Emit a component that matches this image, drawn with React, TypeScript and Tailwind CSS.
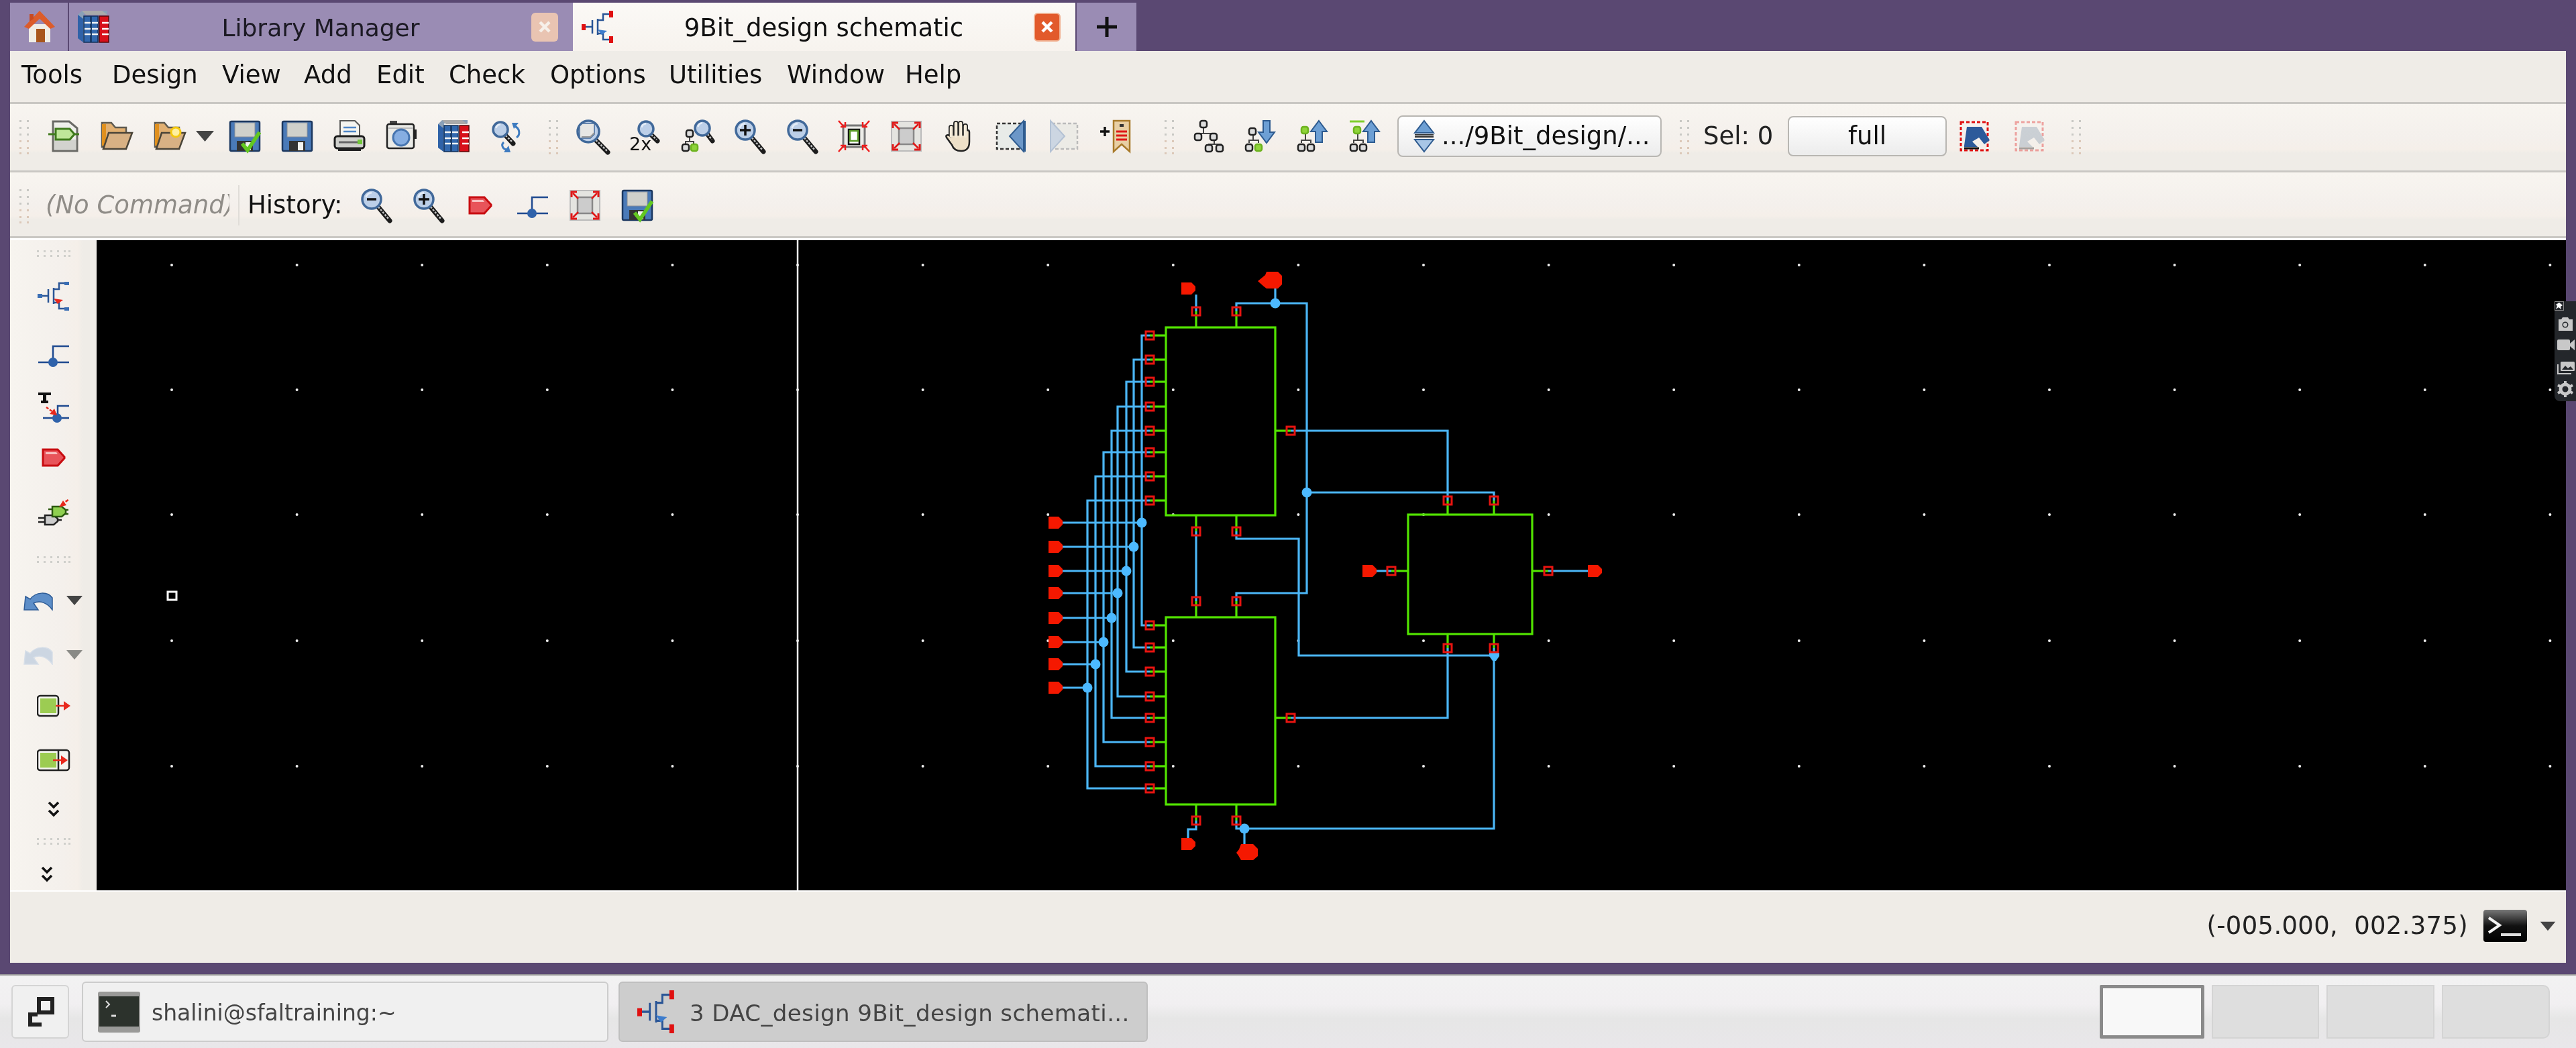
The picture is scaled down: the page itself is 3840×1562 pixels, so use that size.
import React from 'react';

// icon helpers, everything on a 48x48 box unless noted
const Svg = ({ children, w = 48, h = 48 }: { children: React.ReactNode; w?: number; h?: number }) => (
  <svg width={w} height={h} viewBox={`0 0 ${w} ${h}`} className="block shrink-0 overflow-visible">{children}</svg>
);

const Lens = ({ cx = 18, cy = 15, r = 14, hx, hy }: { cx?: number; cy?: number; r?: number; hx?: number; hy?: number }) => {
  const ex = hx ?? cx + r + 13;
  const ey = hy ?? cy + r + 18;
  return (
    <g>
      <line x1={cx + r * 0.6} y1={cy + r * 0.7} x2={ex} y2={ey} stroke="#1c1c1c" strokeWidth="7" strokeLinecap="round" />
      <line x1={cx + r * 0.7} y1={cy + r * 0.8} x2={ex - 1} y2={ey - 2} stroke="#c4c4c4" strokeWidth="2.5" strokeDasharray="3 2" />
      <circle cx={cx} cy={cy} r={r} fill="#bccfe8" stroke="#41699a" strokeWidth="3.5" />
      <path d={`M${cx - r * 0.6} ${cy - r * 0.2}A${r * 0.7} ${r * 0.7} 0 0 1 ${cx} ${cy - r * 0.7}`} stroke="#e6eef8" strokeWidth="2.5" fill="none" />
    </g>
  );
};

const ZoomIn = () => (
  <Svg><Lens /><path d="M10 15H26M18 7V23" stroke="#111" strokeWidth="3.5" /></Svg>
);
const ZoomOut = () => (
  <Svg><Lens /><path d="M11 15H25" stroke="#111" strokeWidth="3.5" /></Svg>
);
const ZoomPlain = () => (
  <Svg>
    <Lens cx={18} cy={17} r={16} hx={47} hy={48} />
    <path d="M5 9L9 5H27V21L21 27H5Z" fill="#e6e6e4" stroke="#41699a" strokeWidth="1.5" />
    <path d="M8 25H21L27 19" stroke="#999" strokeWidth="2" fill="none" />
  </Svg>
);
const Zoom2x = () => (
  <Svg>
    <Lens cx={26} cy={13} r={11} hx={43} hy={31} />
    <text x="1" y="45" fontSize="27" fontFamily="'DejaVu Sans',sans-serif" fill="#111">2x</text>
  </Svg>
);
const SearchRefresh = () => (
  <Svg>
    <Lens cx={15} cy={14} r={11} hx={34} hy={35} />
    <path d="M36 9C44 12 45 22 39 26" stroke="#3f7cc0" strokeWidth="3" fill="none" />
    <path d="M20 33C15 37 19 44 25 44" stroke="#3f7cc0" strokeWidth="3" fill="none" />
    <path d="M32 4H42L35 13ZM30 48H20L27 38Z" fill="#3f7cc0" />
  </Svg>
);

const TreeNode = ({ x, y, c = '#ddd', s = '#222' }: { x: number; y: number; c?: string; s?: string }) => (
  <rect x={x} y={y} width="10" height="10" rx="3" fill={c} stroke={s} strokeWidth="2.5" />
);
const ZoomTree = () => (
  <Svg>
    <Lens cx={32} cy={12} r={11} hx={47} hy={31} />
    <path d="M13 24V32M7 36V32H19V36" stroke="#444" strokeWidth="2" fill="none" />
    <TreeNode x={8} y={15} /><TreeNode x={2} y={36} /><TreeNode x={15} y={36} c="#8fd43a" s="#6db31f" />
  </Svg>
);
const Tree = () => (
  <Svg>
    <path d="M16 10V20M8 22V20H32V22M32 30V36H24V38M32 36H42V38M8 28V30" stroke="#444" strokeWidth="2" fill="none" />
    <TreeNode x={11} y={1} /><TreeNode x={3} y={20} /><TreeNode x={26} y={20} /><TreeNode x={19} y={37} /><TreeNode x={35} y={37} />
  </Svg>
);
const TreeDown = () => (
  <Svg>
    <path d="M12 20V30M6 34V30H20V34" stroke="#444" strokeWidth="2" fill="none" />
    <TreeNode x={6} y={12} /><TreeNode x={1} y={36} /><TreeNode x={15} y={36} c="#8fd43a" s="#6db31f" />
    <path d="M27 1H37V18H44L32 34L20 18H27Z" fill="#6d9fd4" stroke="#2d5a8f" strokeWidth="2" />
  </Svg>
);
const TreeUp = ({ bar = false }: { bar?: boolean }) => (
  <Svg>
    <path d="M12 20V30M6 34V30H20V34" stroke="#444" strokeWidth="2" fill="none" />
    {bar && <path d="M0 2H22" stroke="#7fce2e" strokeWidth="3" />}
    <TreeNode x={6} y={10} c="#8fd43a" s="#6db31f" /><TreeNode x={1} y={36} /><TreeNode x={15} y={36} />
    <path d="M32 1L44 17H37V33H27V17H20Z" fill="#6d9fd4" stroke="#2d5a8f" strokeWidth="2" />
  </Svg>
);

const NewFile = () => (
  <Svg>
    <path d="M8 2H32L44 12V46H8Z" fill="#efefeb" stroke="#6a6a66" strokeWidth="3" />
    <rect x="10" y="29" width="32" height="15" fill="#d2d2ce" />
    <path d="M1 21H13M37 21H47" stroke="#3f7a1c" strokeWidth="3" />
    <path d="M12 13H33L40 21L33 29H12Z" fill="#bfe69a" stroke="#3f7a1c" strokeWidth="3" />
  </Svg>
);
const Folder = ({ star = false }: { star?: boolean }) => (
  <Svg>
    <path d="M2 4H16L22 11H38V40H2Z" fill="#e2b072" stroke="#5e5a50" strokeWidth="2.5" />
    <path d="M2 6H8V38H2Z" fill="#e0901e" />
    <path d="M4 43L12 19H47L38 43Z" fill="#d8b184" stroke="#4a4438" strokeWidth="2.5" />
    {star && <circle cx="33" cy="18" r="7" fill="#fff0a0" stroke="#f5c810" strokeWidth="3" />}
  </Svg>
);
const Floppy = ({ check = false }: { check?: boolean }) => (
  <Svg>
    <rect x="2" y="2" width="44" height="44" rx="2" fill="#4a7ab8" stroke="#1c3860" strokeWidth="2.5" />
    <rect x="9" y="4" width="30" height="21" fill="#cfd0cb" stroke="#8a9098" strokeWidth="1" />
    <rect x="12" y="31" width="24" height="15" fill="#333" />
    <rect x="25" y="33" width="8" height="12" fill="#f4f4f0" />
    {check && <path d="M20 35L28 45L46 18" stroke="#62c820" strokeWidth="5.5" fill="none" />}
  </Svg>
);
const Printer = () => (
  <Svg>
    <path d="M10 1H32L39 8V26H10Z" fill="#f4f4f0" stroke="#555" strokeWidth="2" />
    <path d="M15 11H34M15 17H34" stroke="#4f86c8" strokeWidth="2.5" />
    <rect x="2" y="24" width="44" height="18" rx="4" fill="#d0d0cc" stroke="#1c1c1c" strokeWidth="3" />
    <path d="M8 33H36" stroke="#666" strokeWidth="3" />
    <rect x="36" y="29" width="7" height="7" fill="#72c83a" />
    <rect x="7" y="42" width="34" height="4" fill="#222" />
  </Svg>
);
const CameraIcon = () => (
  <Svg>
    <path d="M6 1H17V7H6Z" fill="#444" />
    <rect x="2" y="6" width="40" height="36" rx="3" fill="#ebebe7" stroke="#222" strokeWidth="2.5" />
    <path d="M3 12H41" stroke="#bbb" strokeWidth="2" />
    <circle cx="23" cy="26" r="12" fill="#86aee2" stroke="#4675b0" strokeWidth="3" />
    <rect x="42" y="14" width="4" height="14" fill="#222" />
  </Svg>
);
const Books = () => (
  <Svg>
    <path d="M0 6L6 0H44V5H9V47L0 41Z" fill="#8aa0b8" />
    <path d="M0 6L8 12V47L0 41Z" fill="#2f62a8" />
    <path d="M6 0H36L44 6H12Z" fill="#aaa" />
    {[9, 20].map((x) => (
      <g key={x}>
        <rect x={x} y="8" width="10" height="39" fill="#3268ae" stroke="#12305a" strokeWidth="1.5" />
        <path d={`M${x + 1} 18H${x + 10}M${x + 1} 27H${x + 10}M${x + 1} 35H${x + 10}`} stroke="#f4f4f4" strokeWidth="2.5" />
      </g>
    ))}
    <rect x="32" y="8" width="14" height="39" fill="#d8101a" stroke="#5a0808" strokeWidth="1.5" />
    <path d="M36 18H46M36 27H46M36 35H46" stroke="#fff" strokeWidth="2.5" />
  </Svg>
);
const Fit = () => (
  <Svg>
    <rect x="8" y="8" width="32" height="32" fill="#ecece8" stroke="#777" strokeWidth="3" />
    <rect x="16" y="14" width="16" height="22" fill="#fff" stroke="#111" strokeWidth="2.5" />
    <rect x="18" y="16" width="12" height="15" fill="#fff" stroke="#5c9c2a" strokeWidth="2.5" />
    <path d="M1 1L9 10M47 1L39 10M1 47L9 38M47 47L39 38" stroke="#ee1c1c" strokeWidth="2.5" />
    <path d="M4 10H11V3M44 10H37V3M4 38H11V45M44 38H37V45" stroke="#ee1c1c" strokeWidth="2.5" fill="none" />
  </Svg>
);
const FitAll = () => (
  <Svg>
    <rect x="2" y="2" width="44" height="44" fill="#e4e4e0" stroke="#bbb" strokeWidth="2" />
    <rect x="13" y="12" width="22" height="24" fill="#ccc" stroke="#888" strokeWidth="2.5" />
    <path d="M6 6L14 14M42 6L34 14M6 42L14 34M42 42L34 34" stroke="#e01818" strokeWidth="2.5" />
    <path d="M4 12V4H12M44 12V4H36M4 36V44H12M44 36V44H36" stroke="#e01818" strokeWidth="3" fill="none" />
  </Svg>
);
const Hand = () => (
  <Svg>
    {['M13 24V11', 'M20 20V5', 'M27 20V5', 'M34 22V9'].map((d) => (
      <path key={d} d={d} stroke="#222" strokeWidth="8" strokeLinecap="round" />
    ))}
    <path d="M6 26L14 37C16 43 20 46 28 46C37 46 40 40 40 32V18C40 14 35 14 34 18V22H13V26C11 21 3 21 6 26Z" fill="#eee0c8" stroke="#222" strokeWidth="2.5" />
    {['M13 24V11', 'M20 24V5', 'M27 24V5', 'M34 24V9'].map((d) => (
      <path key={d} d={d} stroke="#f3ead8" strokeWidth="4.5" strokeLinecap="round" />
    ))}
  </Svg>
);
const PrevView = () => (
  <Svg>
    <rect x="3" y="5" width="38" height="38" fill="#e8ebe8" stroke="#333" strokeWidth="2.5" strokeDasharray="5 3" />
    <path d="M43 1V47L22 24Z" fill="#6c97c8" stroke="#2f5c90" strokeWidth="2" />
    <rect x="42" y="1" width="4" height="46" fill="#2f5c90" />
  </Svg>
);
const NextView = () => (
  <Svg>
    <rect x="7" y="5" width="38" height="38" fill="#ecebe6" stroke="#bbb" strokeWidth="2.5" strokeDasharray="5 3" />
    <path d="M5 1V47L26 24Z" fill="#ccd6e2" stroke="#b4c2d4" strokeWidth="2" />
  </Svg>
);
const Bookmark = () => (
  <Svg>
    <path d="M1 17H15M8 10V24" stroke="#111" strokeWidth="3.5" />
    <path d="M21 1H45V47L33 36L21 47Z" fill="#e8cfa4" stroke="#a87a2a" strokeWidth="2.5" />
    <rect x="30" y="6" width="6" height="4" fill="#333" />
    <path d="M25 17H41M25 23H41M25 29H41" stroke="#e01818" strokeWidth="3" />
  </Svg>
);
const Updown = () => (
  <Svg w={36} h={48}>
    <path d="M18 1L32 19H4Z" fill="#6d9fd4" stroke="#2d5a8f" strokeWidth="2" />
    <path d="M18 47L32 29H4Z" fill="#a8c6e6" stroke="#2d5a8f" strokeWidth="2" />
    <path d="M4 22H32M4 25H32" stroke="#333" strokeWidth="2" />
  </Svg>
);
const DashBoxUndo = ({ faded = false }: { faded?: boolean }) => (
  <Svg>
    <g opacity={faded ? 0.35 : 1}>
      <rect x="3" y="3" width="40" height="42" fill="none" stroke="#e01010" strokeWidth="3" strokeDasharray="5 3" />
      <path d="M8 38L12 10H34L46 30L38 36L30 26L20 32L28 40H8Z" fill={faded ? '#7f94aa' : '#2c5a9a'} />
      <path d="M8 42H30" stroke="#111" strokeWidth="3" />
    </g>
  </Svg>
);
const Caret = ({ c = '#444', w = 27, h = 18 }: { c?: string; w?: number; h?: number }) => (
  <svg width={w} height={h} viewBox="0 0 27 18" className="block shrink-0"><path d="M0 1H27L13.5 17Z" fill={c} /></svg>
);
const Grip = () => (
  <Svg w={16} h={52}>
    {[2, 12, 22, 32, 42, 50].map((y, i) => (
      <g key={y} fill={i < 3 ? '#c8c8c4' : '#dcc8b8'}>
        <rect x="1" y={y} width="3" height="3" /><rect x="12" y={y} width="3" height="3" />
      </g>
    ))}
  </Svg>
);
const GripH = () => (
  <Svg w={50} h={14}>
    {[0, 10, 20, 30, 40, 47].map((x) => (
      <g key={x} fill="#cfcfcb"><rect x={x} y="2" width="3" height="3" /><rect x={x} y="9" width="3" height="3" /></g>
    ))}
  </Svg>
);

// left palette and history
const Mos = ({ w = 48, h = 48, red = true }: { w?: number; h?: number; red?: boolean }) => (
  <svg width={w} height={h} viewBox="0 0 48 48" preserveAspectRatio="none" className="block shrink-0">
    <path d="M2 24H16M16 14V34M24 12V36M24 14H32V5H46M24 34H32V43H46" stroke="#2a5596" strokeWidth="2.5" fill="none" />
    <path d="M24 28L38 30L30 36Z" fill={red ? '#e8281c' : '#3d7ccc'} />
    {!red && <g fill="#e01010"><rect x="0" y="20" width="6" height="9" /><rect x="41" y="0" width="6" height="10" /><rect x="41" y="38" width="6" height="10" /></g>}
    {red && <g fill="#3a6eb4"><rect x="0" y="21" width="7" height="6" /><rect x="40" y="3" width="7" height="5" /><rect x="40" y="41" width="7" height="5" /></g>}
  </svg>
);
const WireIcon = () => (
  <Svg>
    <path d="M1 36H47M23 36V12H47" stroke="#1f4a90" strokeWidth="2.5" fill="none" />
    <circle cx="23" cy="36" r="7" fill="#2f62aa" />
  </Svg>
);
const WireName = () => (
  <Svg>
    <path d="M8 42H47M30 42V24H47" stroke="#1f4a90" strokeWidth="2.5" fill="none" />
    <circle cx="29" cy="42" r="7" fill="#2f62aa" />
    <path d="M1 4H20V8H1ZM8 8H13V16H8ZM5 16H16V20H5Z" fill="#111" />
    <path d="M13 26L26 35" stroke="#e8281c" strokeWidth="2.5" strokeDasharray="4 2" />
    <path d="M29 38L18 36L25 28Z" fill="#e8281c" />
  </Svg>
);
const LabelIcon = ({ w = 36, h = 30 }: { w?: number; h?: number }) => (
  <svg width={w} height={h} viewBox="0 0 36 30" className="block shrink-0">
    <path d="M2 3H24L34 14V16L24 27H2Z" fill="#e8545a" stroke="#c80c10" strokeWidth="3" />
    <path d="M6 7H22L24 10H6Z" fill="#f8c0c0" />
  </svg>
);
const Plugs = () => (
  <Svg>
    <path d="M1 32H12M1 38H12M30 35H36" stroke="#222" strokeWidth="2.5" />
    <path d="M11 28H24L30 33V37L24 42H11Z" fill="#ccc" stroke="#222" strokeWidth="2.5" />
    <path d="M16 19H24M34 20H46M34 26H46" stroke="#2c5a10" strokeWidth="2.5" />
    <path d="M22 15H36L42 20V25L36 30H22Z" fill="#8fd050" stroke="#2c5a10" strokeWidth="2.5" />
    <path d="M36 12L47 4" stroke="#e8281c" strokeWidth="2.5" strokeDasharray="5 2" />
    <path d="M32 16L38 6L43 13Z" fill="#e8281c" />
  </Svg>
);
const Undo = ({ faded = false }: { faded?: boolean }) => (
  <svg width="44" height="30" viewBox="0 0 44 30" className="block shrink-0">
    <path d="M1 29L3 9L10 13C18 2 36 1 43 11V29C36 19 25 14 15 19L22 29Z" fill={faded ? '#ccd6e2' : '#5d8ec8'} stroke={faded ? '#d6dee8' : '#2f5c96'} strokeWidth="1.5" />
  </svg>
);
const BoxArrow = ({ split = false }: { split?: boolean }) => (
  <svg width="50" height="34" viewBox="0 0 50 34" className="block shrink-0">
    <rect x="1" y="2" width={split ? 47 : 31} height="30" rx="4" fill="#f4f4f0" stroke="#222" strokeWidth="2.5" />
    {split && <path d="M32 2V32" stroke="#222" strokeWidth="2.5" />}
    <rect x="5" y="6" width="24" height="22" fill="#9ccc52" />
    <path d={split ? 'M24 17H40' : 'M28 17H42'} stroke="#e8281c" strokeWidth="2.5" />
    <path d={split ? 'M36 10L46 17L36 24Z' : 'M40 10L50 17L40 24Z'} fill="#e8281c" />
  </svg>
);
const Chev = () => (
  <svg width="18" height="26" viewBox="0 0 18 26" className="block shrink-0">
    <path d="M2 3L9 10L16 3M2 15L9 22L16 15" stroke="#111" strokeWidth="3.5" fill="none" />
  </svg>
);
const StatusTerminal = () => (
  <svg width="65" height="48" viewBox="0 0 65 48" className="block shrink-0">
    <defs><linearGradient id="st" x1="0" y1="0" x2="0" y2="1"><stop offset="0" stopColor="#777" /><stop offset="0.5" stopColor="#111" /><stop offset="1" stopColor="#000" /></linearGradient></defs>
    <rect width="65" height="48" rx="4" fill="url(#st)" />
    <path d="M8 12L24 23L8 34" stroke="#f4f4f4" strokeWidth="4" fill="none" />
    <path d="M26 37H56" stroke="#ddd" strokeWidth="4" />
  </svg>
);
const TaskTerminal = () => (
  <svg width="63" height="61" viewBox="0 0 63 61" className="block shrink-0">
    <rect width="63" height="61" rx="3" fill="#9a9a98" />
    <rect x="2" y="7" width="59" height="45" fill="#2c322c" />
    <path d="M12 14L17 19L12 24" stroke="#ddd" strokeWidth="2" fill="none" />
    <path d="M20 36H27" stroke="#ddd" strokeWidth="3" />
  </svg>
);

const HomeIcon = () => (
  <Svg>
    <rect x="8" y="20" width="32" height="27" fill="#f0eee6" />
    <rect x="19" y="27" width="13" height="20" fill="#a8561c" />
    <path d="M24 0L47 24L40 27L24 12L8 27L1 24Z" fill="#dc5c2a" />
    <path d="M9 5H15V12L9 16Z" fill="#c84a20" />
  </Svg>
);

// schematic data, in page pixels
const topY = [500, 536, 569, 606, 642, 674, 710, 746];
const botY = [932, 965, 1001, 1038, 1070, 1106, 1142, 1175];
const busX = [1702, 1690, 1679, 1666, 1657, 1645, 1633, 1621];
const inY = [779, 815, 851, 884, 921, 957, 990, 1025];
const columns = Array.from({ length: 20 }, (_, i) => 256 + i * 186.6);
const rows = [395, 581, 767, 955, 1142];

const RedPin = ({ x, y }: { x: number; y: number }) => (
  <path d={`M${x} ${y - 9}H${x + 15}L${x + 21} ${y - 3}V${y + 3}L${x + 15} ${y + 9}H${x}Z`} fill="#f51800" />
);
const Term = ({ x, y }: { x: number; y: number }) => (
  <rect x={x - 6} y={y - 6} width="12" height="12" fill="none" stroke="#e81410" strokeWidth="3" />
);

const Schematic = () => {
  const wires = [
    'M1584 779H1702', 'M1584 815H1690', 'M1584 851H1679', 'M1584 884H1666',
    'M1584 921H1657', 'M1584 957H1645', 'M1584 990H1633', 'M1584 1025H1621',
    'M1783 439V464', 'M1901 430V452', 'M1843 464V452H1948V884H1843V896',
    'M1948 734H2227V746', 'M1924 642H2158V746', 'M1783 792V896',
    'M1843 792V803H1936V977H2227', 'M1924 1070H2158V966', 'M2227 966V1235H1843V1223',
    'M1855 1235V1258', 'M1783 1223V1236H1771V1249',
    'M2052 851H2074', 'M2308 851H2367',
  ];
  const green = ['M1783 464V488', 'M1843 464V488', 'M1783 768V792', 'M1843 768V792', 'M1901 642H1924',
    'M1783 896V920', 'M1843 896V920', 'M1783 1199V1223', 'M1843 1199V1223', 'M1901 1070H1924',
    'M2074 851H2099', 'M2284 851H2308', 'M2158 746V767', 'M2227 746V767', 'M2158 945V966', 'M2227 945V966',
  ];
  return (
    <svg viewBox="144 358 3681 969" className="block w-full h-full bg-black">
      {columns.map((x) => rows.map((y) => <circle key={`${x}-${y}`} cx={x} cy={y} r="2" fill="#eee" />))}
      <line x1="1189" y1="358" x2="1189" y2="1327" stroke="#f4f4f4" strokeWidth="2.5" />
      <rect x="250" y="882" width="13" height="12" fill="none" stroke="#fff" strokeWidth="3" />

      <g fill="none" stroke="#4bb6f6" strokeWidth="3.2">
        {busX.map((x, i) => (
          <path key={x} d={`M1714 ${topY[i]}H${x}V${botY[i]}H1714`} />
        ))}
        {wires.map((d) => <path key={d} d={d} />)}
      </g>
      <g fill="none" stroke="#52e400" strokeWidth="3.2">
        <rect x="1738" y="488" width="163" height="280" />
        <rect x="1738" y="920" width="163" height="279" />
        <rect x="2099" y="767" width="185" height="178" />
        {topY.map((y) => <path key={y} d={`M1714 ${y}H1738`} />)}
        {botY.map((y) => <path key={y} d={`M1714 ${y}H1738`} />)}
        {green.map((d) => <path key={d} d={d} />)}
      </g>
      <g fill="#4cb9ff">
        {busX.map((x, i) => <circle key={x} cx={x} cy={inY[i]} r="7.5" />)}
        <circle cx="1901" cy="452" r="7.5" />
        <circle cx="1948" cy="734" r="7.5" />
        <circle cx="1855" cy="1235" r="7.5" />
        <path d="M2220 973H2235V978L2230 985H2225L2220 978Z" />
      </g>
      {topY.concat(botY).map((y) => <Term key={y} x={1714} y={y} />)}
      {[464, 792, 896, 1223].flatMap((y) => [1783, 1843].map((x) => <Term key={`${x}-${y}`} x={x} y={y} />))}
      <Term x={1924} y={642} /><Term x={1924} y={1070} />
      <Term x={2074} y={851} /><Term x={2308} y={851} />
      {[2158, 2227].flatMap((x) => [746, 966].map((y) => <Term key={`${x}-${y}`} x={x} y={y} />))}

      {inY.map((y) => <RedPin key={y} x={1563} y={y} />)}
      <RedPin x={1761} y={430} /><RedPin x={1761} y={1258} />
      <RedPin x={2031} y={851} /><RedPin x={2367} y={851} />
      <path d="M1875 419L1886 410L1888 405H1905L1911 411V424L1905 430H1888L1884 427Z" fill="#f51800" />
      <path d="M1843 1271L1847 1266L1850 1258H1868L1875 1265V1276L1868 1282H1850L1846 1275Z" fill="#f51800" />
    </svg>
  );
};

const toolbarBg = 'bg-[linear-gradient(#f8f5f0_0%,#f4f0ec_50%,#f5efe9_68%,#efece7_74%,#efece7_100%)]';

const Slot = ({ children, w = 'w-[78px]' }: { children: React.ReactNode; w?: string }) => (
  <div className={`${w} flex justify-center items-center shrink-0`}>{children}</div>
);

const CloseBtn = ({ active }: { active?: boolean }) => (
  <div className={`w-[40px] h-[43px] rounded-[6px] flex items-center justify-center shrink-0 ${active ? 'bg-[#e25a2b] border-2 border-[#f0b090]' : 'bg-[#e9c4b2]'}`}>
    <svg width="18" height="18" viewBox="0 0 18 18"><path d="M2 2L16 16M16 2L2 16" stroke={active ? '#fff' : '#f6f0ea'} strokeWidth="4.5" /></svg>
  </div>
);

// widths hold each entry at its place in the menu
const menus = [
  { label: 'Tools', w: 'w-[135px]' },
  { label: 'Design', w: 'w-[164px]' },
  { label: 'View', w: 'w-[122px]' },
  { label: 'Add', w: 'w-[108px]' },
  { label: 'Edit', w: 'w-[108px]' },
  { label: 'Check', w: 'w-[151px]' },
  { label: 'Options', w: 'w-[177px]' },
  { label: 'Utilities', w: 'w-[176px]' },
  { label: 'Window', w: 'w-[176px]' },
  { label: 'Help', w: 'w-[100px]' },
];

export default function App() {
  return (
    <div className="relative w-[3840px] h-[1562px] overflow-hidden bg-[#eeeeee] [font-family:'DejaVu_Sans',sans-serif] text-[#111]">
      <div className="blur-[0.6px]">
        <div className="h-[1452px] bg-[#5a4872] pt-[4px] px-[15px] pb-[17px] flex flex-col">
          {/* tabs */}
          <div className="h-[72px] flex shrink-0">
            <div className="w-[88px] bg-[#9a8cb4] border-r-2 border-[#5a4872] pl-[20px] flex items-center">
              <HomeIcon />
            </div>
            <div className="w-[751px] bg-[#9a8cb4] pl-[13px] pr-[22px] flex items-center">
              <Books />
              <div className="flex-1 text-center text-[36px] pt-[3px] text-[#1c1a24]">Library Manager</div>
              <CloseBtn />
            </div>
            <div className="w-[749px] bg-[linear-gradient(#fbf9f6,#f7f3ee)] pl-[13px] pr-[22px] flex items-center">
              <Mos red={false} />
              <div className="flex-1 text-center text-[37px] pt-[3px] whitespace-nowrap">9Bit_design schematic</div>
              <CloseBtn active />
            </div>
            <div className="w-[89px] ml-[2px] bg-[#9a8cb4] flex items-center justify-center">
              <svg width="36" height="36" viewBox="0 0 36 36"><path d="M18 3V33M3 18H33" stroke="#111" strokeWidth="5" /></svg>
            </div>
          </div>

          {/* menu */}
          <div className="h-[76px] shrink-0 bg-[#efece7] pl-[17px] pb-[4px] flex items-center text-[37px]">
            {menus.map((m) => <span key={m.label} className={`${m.w} shrink-0`}>{m.label}</span>)}
          </div>

          {/* main toolbar */}
          <div className={`h-[102px] shrink-0 border-t-[3px] border-[#c9c7c3] ${toolbarBg} flex items-center pb-[3px] text-[37px]`}>
            <div className="ml-[13px] w-[16px]"><Grip /></div>
            <div className="ml-[11px] flex">
              <Slot w="w-[79px]"><NewFile /></Slot>
              <Slot w="w-[79px]"><Folder /></Slot>
              <Slot w="w-[79px]"><Folder star /></Slot>
            </div>
            <Slot w="w-[26px]"><Caret /></Slot>
            <div className="ml-[8px] flex">
              <Slot><Floppy check /></Slot>
              <Slot><Floppy /></Slot>
              <Slot><Printer /></Slot>
              <Slot><CameraIcon /></Slot>
              <Slot><Books /></Slot>
              <Slot><SearchRefresh /></Slot>
            </div>
            <div className="ml-[23px]"><Grip /></div>
            <div className="ml-[11px] flex">
              <Slot><ZoomPlain /></Slot>
              <Slot><Zoom2x /></Slot>
              <Slot><ZoomTree /></Slot>
              <Slot><ZoomIn /></Slot>
              <Slot><ZoomOut /></Slot>
              <Slot><Fit /></Slot>
              <Slot><FitAll /></Slot>
              <Slot><Hand /></Slot>
              <Slot><PrevView /></Slot>
              <Slot><NextView /></Slot>
              <Slot><Bookmark /></Slot>
            </div>
            <div className="ml-[33px]"><Grip /></div>
            <div className="ml-[12px] flex">
              <Slot><Tree /></Slot>
              <Slot><TreeDown /></Slot>
              <Slot><TreeUp /></Slot>
              <Slot><TreeUp bar /></Slot>
            </div>
            <div className="ml-[8px] w-[394px] h-[62px] rounded-[8px] border-2 border-[#b8b6b2] bg-[linear-gradient(#ffffff,#ececec)] flex items-center pl-[20px] gap-[8px] whitespace-nowrap">
              <Updown />
              <span>.../9Bit_design/...</span>
            </div>
            <div className="ml-[26px]"><Grip /></div>
            <div className="ml-[20px] w-[103px] whitespace-nowrap text-[#222]">Sel: 0</div>
            <div className="ml-[23px] w-[237px] h-[60px] rounded-[8px] border-2 border-[#b8b6b2] bg-[linear-gradient(#ffffff,#ececec)] flex items-center justify-center">full</div>
            <div className="ml-[3px]"><Slot><DashBoxUndo /></Slot></div>
            <div className="ml-[4px]"><Slot><DashBoxUndo faded /></Slot></div>
            <div className="ml-[22px]"><Grip /></div>
          </div>

          {/* command toolbar */}
          <div className={`h-[98px] shrink-0 border-t-[3px] border-[#c9c7c3] ${toolbarBg} flex items-center pt-[3px] text-[37px]`}>
            <div className="ml-[13px] w-[16px]"><Grip /></div>
            <div className="ml-[24px] w-[274px] overflow-hidden whitespace-nowrap italic text-[#8f8c87]">(No Command)</div>
            <div className="ml-[13px] w-[2px] h-[60px] bg-[#e0ddd8]" />
            <div className="ml-[12px] w-[138px] whitespace-nowrap">History:</div>
            <div className="ml-[14px] flex">
              <Slot><ZoomOut /></Slot>
              <Slot><ZoomIn /></Slot>
              <Slot><LabelIcon /></Slot>
              <Slot><WireIcon /></Slot>
              <Slot><FitAll /></Slot>
              <Slot><Floppy check /></Slot>
            </div>
          </div>
          <div className="h-[6px] shrink-0 border-t-[3px] border-[#c9c7c3] bg-white" />

          {/* palette and canvas */}
          <div className="h-[969px] shrink-0 flex">
            <div className="w-[129px] shrink-0 flex flex-col items-center bg-[linear-gradient(90deg,#f7f4ef_0%,#f4f0ec_60%,#f5efe9_78%,#efece7_84%)]">
              <div className="h-[40px] flex items-center"><GripH /></div>
              <div className="h-[86px] flex items-center"><Mos /></div>
              <div className="h-[88px] flex items-center"><WireIcon /></div>
              <div className="h-[66px] flex items-center"><WireName /></div>
              <div className="h-[88px] flex items-center"><LabelIcon /></div>
              <div className="h-[76px] flex items-center"><Plugs /></div>
              <div className="h-[64px] flex items-center"><GripH /></div>
              <div className="h-[58px] flex items-center gap-[18px]"><Undo /><Caret w={28} h={16} /></div>
              <div className="h-[104px] flex items-center gap-[18px]"><Undo faded /><Caret c="#8a8a86" w={28} h={16} /></div>
              <div className="h-[48px] flex items-center"><BoxArrow /></div>
              <div className="h-[114px] flex items-center"><BoxArrow split /></div>
              <div className="h-[32px] flex items-center"><Chev /></div>
              <div className="h-[64px] flex items-center"><GripH /></div>
              <div className="h-[34px] flex items-center pr-[20px]"><Chev /></div>
            </div>
            <div className="flex-1 min-w-0"><Schematic /></div>
          </div>

          {/* status */}
          <div className="flex-1 border-t-[2px] border-white bg-[#efece7] flex items-center justify-end pr-[14px] pb-[4px] text-[37px]">
            <span className="whitespace-pre mr-[23px] tracking-[0.3px] text-[#222]">(-005.000,  002.375)</span>
            <StatusTerminal />
            <div className="ml-[18px]"><Caret w={26} h={15} /></div>
          </div>
        </div>

        {/* task bar */}
        <div className="h-[110px] border-t-2 border-[#999] bg-[linear-gradient(#f2f2f2_0%,#f1eff1_40%,#e6e6e6_60%,#e9e7ea_100%)] pl-[17px] pr-[39px] flex items-center text-[#444]">
          <div className="w-[86px] h-[80px] rounded-[6px] border-2 border-[#d4d4d4] bg-[#f0f0f0] flex items-center justify-center">
            <svg width="44" height="44" viewBox="0 0 44 44"><rect x="20" y="3" width="20" height="20" fill="none" stroke="#222" strokeWidth="6" /><path d="M18 26H7V41H24" fill="none" stroke="#222" strokeWidth="6" /></svg>
          </div>
          <div className="ml-[19px] w-[785px] h-[90px] rounded-[6px] border-2 border-[#cccccc] bg-[#f0f0f0] flex items-center pl-[22px] gap-[17px] whitespace-nowrap text-[33px]">
            <TaskTerminal />
            <span className="pt-[4px]">shalini@sfaltraining:~</span>
          </div>
          <div className="ml-[15px] w-[789px] h-[90px] rounded-[6px] border-2 border-[#bfbfbf] bg-[#cdcdcd] flex items-center pl-[26px] gap-[22px] whitespace-nowrap text-[34px] tracking-[0.4px]">
            <Mos red={false} w={56} h={64} />
            <span className="pt-[4px]">3 DAC_design 9Bit_design schemati...</span>
          </div>
          <div className="ml-auto flex h-[80px] gap-[11px]">
            <div className="w-[156px] border-[5px] border-[#8a8a8a] bg-[#f8f8f8] rounded-[2px]" />
            <div className="w-[160px] border-2 border-[#d4d4d4] bg-[#dedede]" />
            <div className="w-[161px] border-2 border-[#d4d4d4] bg-[#dedede]" />
            <div className="w-[161px] border-2 border-[#d4d4d4] bg-[#dedede] rounded-r-[10px]" />
          </div>
        </div>
      </div>

      {/* floating capture widget */}
      <div className="absolute left-[3808px] top-[449px] w-[32px] h-[149px] bg-[#24272b] rounded-l-[8px]">
        <svg width="32" height="149" viewBox="0 0 32 149" className="block">
          <rect x="0.5" y="0.5" width="13" height="13" fill="none" stroke="#888" />
          <path d="M7 2L12 6L9 8L10 12L6 9L2 12L4 7L2 5Z" fill="#fff" />
          <path d="M6 27H10L12 24H20L22 27H27V44H6Z" fill="#c8c8c8" />
          <circle cx="16" cy="35" r="4.5" fill="#24272b" /><circle cx="16" cy="35" r="3" fill="#c8c8c8" />
          <rect x="4" y="57" width="19" height="16" rx="2" fill="#c8c8c8" />
          <path d="M23 63L30 57V73L23 67Z" fill="#c8c8c8" />
          <rect x="9" y="90" width="21" height="14" rx="1.5" fill="#c8c8c8" />
          <path d="M11 102L16 96L20 100L24 97L28 102Z" fill="#24272b" />
          <path d="M5 94V108H25" fill="none" stroke="#c8c8c8" strokeWidth="2" />
          <circle cx="16" cy="131" r="7" fill="none" stroke="#c8c8c8" strokeWidth="5" />
          <path d="M16 119V124M16 138V143M5 125L10 128M22 134L27 137M5 137L10 134M22 128L27 125" stroke="#c8c8c8" strokeWidth="4" />
        </svg>
      </div>
    </div>
  );
}
